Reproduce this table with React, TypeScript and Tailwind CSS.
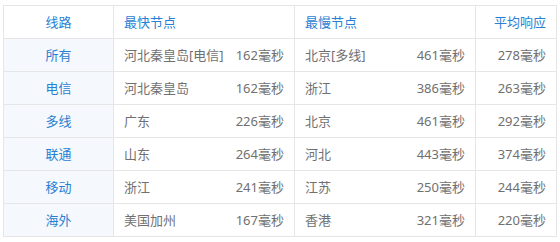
const rows = [
  { line: '所有', fast: '河北秦皇岛[电信]', fastMs: 162, slow: '北京[多线]', slowMs: 461, avg: 278 },
  { line: '电信', fast: '河北秦皇岛', fastMs: 162, slow: '浙江', slowMs: 386, avg: 263 },
  { line: '多线', fast: '广东', fastMs: 226, slow: '北京', slowMs: 461, avg: 292 },
  { line: '联通', fast: '山东', fastMs: 264, slow: '河北', slowMs: 443, avg: 374 },
  { line: '移动', fast: '浙江', fastMs: 241, slow: '江苏', slowMs: 250, avg: 244 },
  { line: '海外', fast: '美国加州', fastMs: 167, slow: '香港', slowMs: 321, avg: 220 },
]

export default function App() {
  return (
    <div
      className="w-[560px] h-[242px] bg-white pt-[5px] pl-[3px]"
      style={{ fontFamily: '"Noto Sans", "Noto Sans CJK SC", sans-serif' }}
    >
      <table className="w-[553px] border-collapse table-fixed text-[13px] leading-none">
        <colgroup>
          <col className="w-[110px]" />
          <col className="w-[181px]" />
          <col className="w-[181px]" />
          <col className="w-[81px]" />
        </colgroup>
        <thead>
          <tr className="h-[33px] text-[#2a7fd4]">
            <th className="border border-[#e6e6e6] font-normal text-center">线路</th>
            <th className="border border-[#e6e6e6] font-normal text-left px-[10px]">最快节点</th>
            <th className="border border-[#e6e6e6] font-normal text-left px-[10px]">最慢节点</th>
            <th className="border border-[#e6e6e6] font-normal text-right px-[10px]">平均响应</th>
          </tr>
        </thead>
        <tbody>
          {rows.map((r) => (
            <tr key={r.line} className="h-[33px] text-[#707070]">
              <td className="border border-[#e6e6e6] bg-[#f5f9fd] text-center text-[#2a7fd4]">{r.line}</td>
              <td className="border border-[#e6e6e6] px-[10px]">
                <div className="flex justify-between">
                  <span>{r.fast}</span>
                  <span>{r.fastMs}毫秒</span>
                </div>
              </td>
              <td className="border border-[#e6e6e6] px-[10px]">
                <div className="flex justify-between">
                  <span>{r.slow}</span>
                  <span>{r.slowMs}毫秒</span>
                </div>
              </td>
              <td className="border border-[#e6e6e6] px-[10px] text-right">{r.avg}毫秒</td>
            </tr>
          ))}
        </tbody>
      </table>
    </div>
  )
}
